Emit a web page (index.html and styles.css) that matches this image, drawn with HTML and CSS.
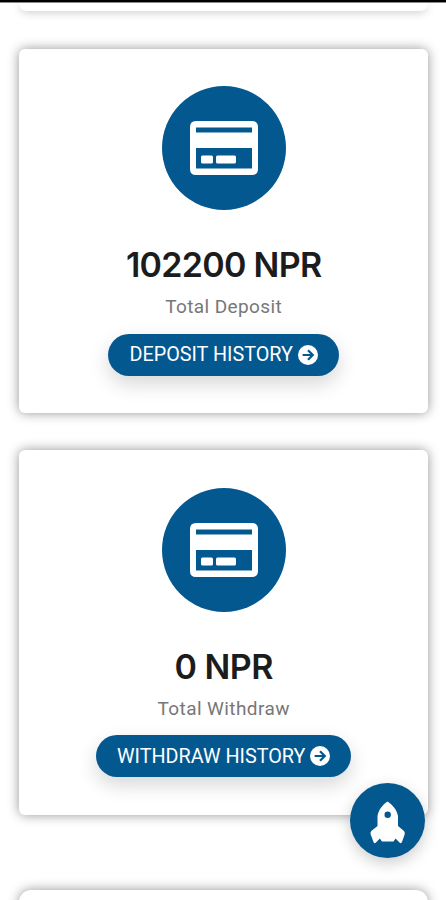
FILE: index.html
```
<!DOCTYPE html>
<html lang="en">
	<head>
		<meta charset="utf-8">
		<title>Dashboard</title>
		<link rel="stylesheet" href="styles.css">
	</head>
	<body>
		<svg class="sprite" width="0" height="0">
			<symbol id="card-icon" viewBox="0 0 68 54">
				<path fill="#fff" fill-rule="evenodd" d="M6 0H62Q68 0 68 6V48Q68 54 62 54H6Q0 54 0 48V6Q0 0 6 0ZM6 6.500V11.500H62V6.500ZM6 27V47.500H62V27Z"/>
				<rect x="11" y="34.500" width="12" height="8" rx="1.500" fill="#fff"/>
				<rect x="26" y="34.500" width="20" height="8" rx="1.500" fill="#fff"/>
			</symbol>
			<symbol id="arrow-icon" viewBox="0 0 20 20">
				<circle cx="10" cy="10" r="10" fill="#fff"/>
				<path d="M4.600 10H14.500M10 5.200L14.800 10L10 14.800" fill="none" stroke="#045890" stroke-width="2.200"/>
			</symbol>
		</svg>
		<div class="topbar"></div>
		<main class="cards">
			<div class="card previous"></div>
			<div class="card">
				<div class="card-icon"><svg><use href="#card-icon"/></svg></div>
				<h3 class="amount long">102200 NPR</h3>
				<p class="caption">Total Deposit</p>
				<a class="button"><span>DEPOSIT HISTORY</span><svg><use href="#arrow-icon"/></svg></a>
			</div>
			<div class="card">
				<div class="card-icon"><svg><use href="#card-icon"/></svg></div>
				<h3 class="amount">0 NPR</h3>
				<p class="caption">Total Withdraw</p>
				<a class="button"><span>WITHDRAW HISTORY</span><svg><use href="#arrow-icon"/></svg></a>
			</div>
			<div class="card next"></div>
		</main>
		<a class="scroll-top">
			<svg width="36" height="44" viewBox="0 0 36 44">
				<path fill="#fff" fill-rule="evenodd" d="M17.500 0.500C22 3.500 27 8.500 28 15V25L34 30Q35.300 31.500 34.600 33.500L32 41Q31 43 29.500 41.500L25.500 37.500L23.500 40.500H12L9.800 37.500L6 41.500Q4.300 43 3.500 41L0.700 33.500Q0 31.500 1.300 30L7.500 25V15C8.500 8.500 13 3.500 17.500 0.500ZM17.700 10.500A3.200 3.200 0 1 0 17.700 16.900A3.200 3.200 0 1 0 17.700 10.500Z"/>
			</svg>
		</a>
	</body>
</html>
```

FILE: styles.css
```
* {
	box-sizing: border-box;
}

body {
	margin: 0;
	height: 900px;
	overflow: hidden;
	background-color: #fff;
	font-family: Roboto, sans-serif;
}

.sprite {
	position: absolute;
}

.topbar {
	height: 3px;
	background-color: #000;
	border-bottom: 1px solid #888;
}

.cards {
	padding: 0 17.8px 0 19.2px;
	height: 897px;
	overflow: hidden;
}

.card {
	display: flex;
	flex-direction: column;
	align-items: center;
	height: 364.5px;
	margin-bottom: 37px;
	padding-top: 37.5px;
	border-radius: 6px;
	background-color: #fff;
	box-shadow: 0 0 12px rgba(0, 0, 0, 0.42);
}

.card.previous {
	height: 8px;
	margin-bottom: 37.8px;
	padding: 0;
	border-radius: 0 0 8px 8px;
	box-shadow: 0 2px 8px -1px rgba(0, 0, 0, 0.25);
}

.card.next {
	margin-top: 75px;
	border-radius: 12px;
}

.card-icon {
	display: flex;
	align-items: center;
	justify-content: center;
	flex: none;
	width: 124px;
	height: 124px;
	border-radius: 50%;
	background-color: #045890;
}

.card-icon svg {
	width: 68px;
	height: 54px;
}

.amount {
	margin: 32px 0 0;
	font: 600 34px/46px Inter, sans-serif;
	letter-spacing: -0.5px;
	color: #1c1c1c;
	white-space: nowrap;
}

.amount.long {
	letter-spacing: -0.7px;
}

.caption {
	margin: 6px 0 0;
	font-size: 19px;
	line-height: 26px;
	letter-spacing: 0.4px;
	color: #777;
}

.button {
	display: flex;
	align-items: center;
	gap: 5px;
	height: 42px;
	margin-top: 13.5px;
	padding: 0 21px;
	border-radius: 21px;
	background-color: #045890;
	box-shadow: 0 8px 20px rgba(0, 0, 0, 0.16);
	color: #fff;
	font-size: 19.8px;
	white-space: nowrap;
}

.button svg {
	width: 20px;
	height: 20px;
}

.scroll-top {
	position: absolute;
	top: 783px;
	left: 350px;
	display: flex;
	align-items: center;
	justify-content: center;
	width: 75px;
	height: 75px;
	padding-top: 5px;
	border-radius: 50%;
	background-color: #045890;
	box-shadow: 0 5px 15px rgba(0, 0, 0, 0.2);
}
```
